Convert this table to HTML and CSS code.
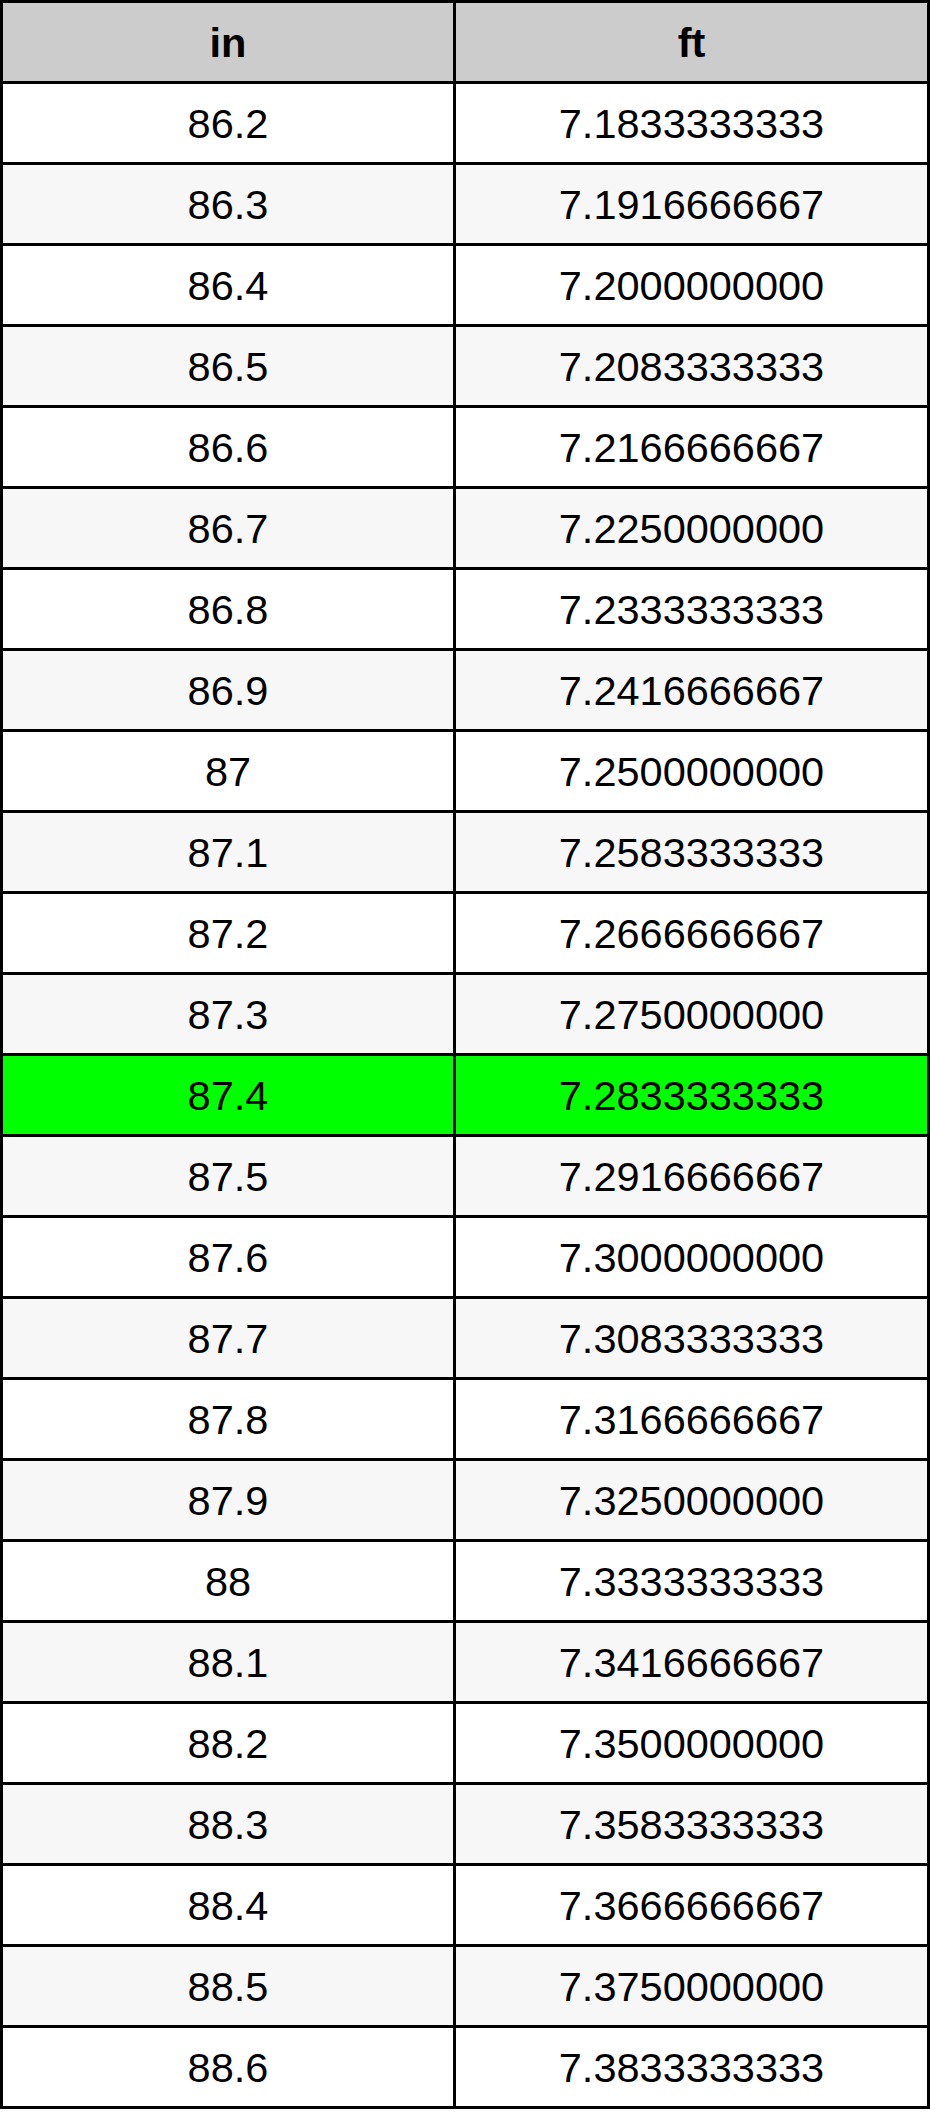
FILE: index.html
```html
<!DOCTYPE html>
<html lang="en">
<head>
<meta charset="utf-8">
<title>in to ft</title>
<link rel="stylesheet" href="styles.css">
</head>
<body>
<div class="table">
  <div class="cell head">in</div><div class="cell head">ft</div>
  <div class="cell">86.2</div><div class="cell">7.1833333333</div>
  <div class="cell alt">86.3</div><div class="cell alt">7.1916666667</div>
  <div class="cell">86.4</div><div class="cell">7.2000000000</div>
  <div class="cell alt">86.5</div><div class="cell alt">7.2083333333</div>
  <div class="cell">86.6</div><div class="cell">7.2166666667</div>
  <div class="cell alt">86.7</div><div class="cell alt">7.2250000000</div>
  <div class="cell">86.8</div><div class="cell">7.2333333333</div>
  <div class="cell alt">86.9</div><div class="cell alt">7.2416666667</div>
  <div class="cell">87</div><div class="cell">7.2500000000</div>
  <div class="cell alt">87.1</div><div class="cell alt">7.2583333333</div>
  <div class="cell">87.2</div><div class="cell">7.2666666667</div>
  <div class="cell alt">87.3</div><div class="cell alt">7.2750000000</div>
  <div class="cell hl">87.4</div><div class="cell hl">7.2833333333</div>
  <div class="cell alt">87.5</div><div class="cell alt">7.2916666667</div>
  <div class="cell">87.6</div><div class="cell">7.3000000000</div>
  <div class="cell alt">87.7</div><div class="cell alt">7.3083333333</div>
  <div class="cell">87.8</div><div class="cell">7.3166666667</div>
  <div class="cell alt">87.9</div><div class="cell alt">7.3250000000</div>
  <div class="cell">88</div><div class="cell">7.3333333333</div>
  <div class="cell alt">88.1</div><div class="cell alt">7.3416666667</div>
  <div class="cell">88.2</div><div class="cell">7.3500000000</div>
  <div class="cell alt">88.3</div><div class="cell alt">7.3583333333</div>
  <div class="cell">88.4</div><div class="cell">7.3666666667</div>
  <div class="cell alt">88.5</div><div class="cell alt">7.3750000000</div>
  <div class="cell">88.6</div><div class="cell">7.3833333333</div>
</div>
</body>
</html>
```

FILE: styles.css
```css
html, body {
  margin: 0;
  padding: 0;
  background: #ffffff;
}

.table {
  display: grid;
  grid-template-columns: 450px 471px;
  grid-auto-rows: 78px;
  gap: 3px;
  padding: 3px;
  width: 930px;
  box-sizing: border-box;
  background: #000000;
  font-family: "Liberation Sans", Arial, sans-serif;
  font-size: 41.5px;
  color: #000000;
}

.cell {
  display: flex;
  align-items: center;
  justify-content: center;
  background: #ffffff;
  line-height: 1;
  padding-top: 1px;
  box-sizing: border-box;
}

.cell.head {
  background: #cccccc;
  font-weight: bold;
}

.cell.alt {
  background: #f7f7f7;
}

.cell.hl {
  background: #00ff00;
}
```
